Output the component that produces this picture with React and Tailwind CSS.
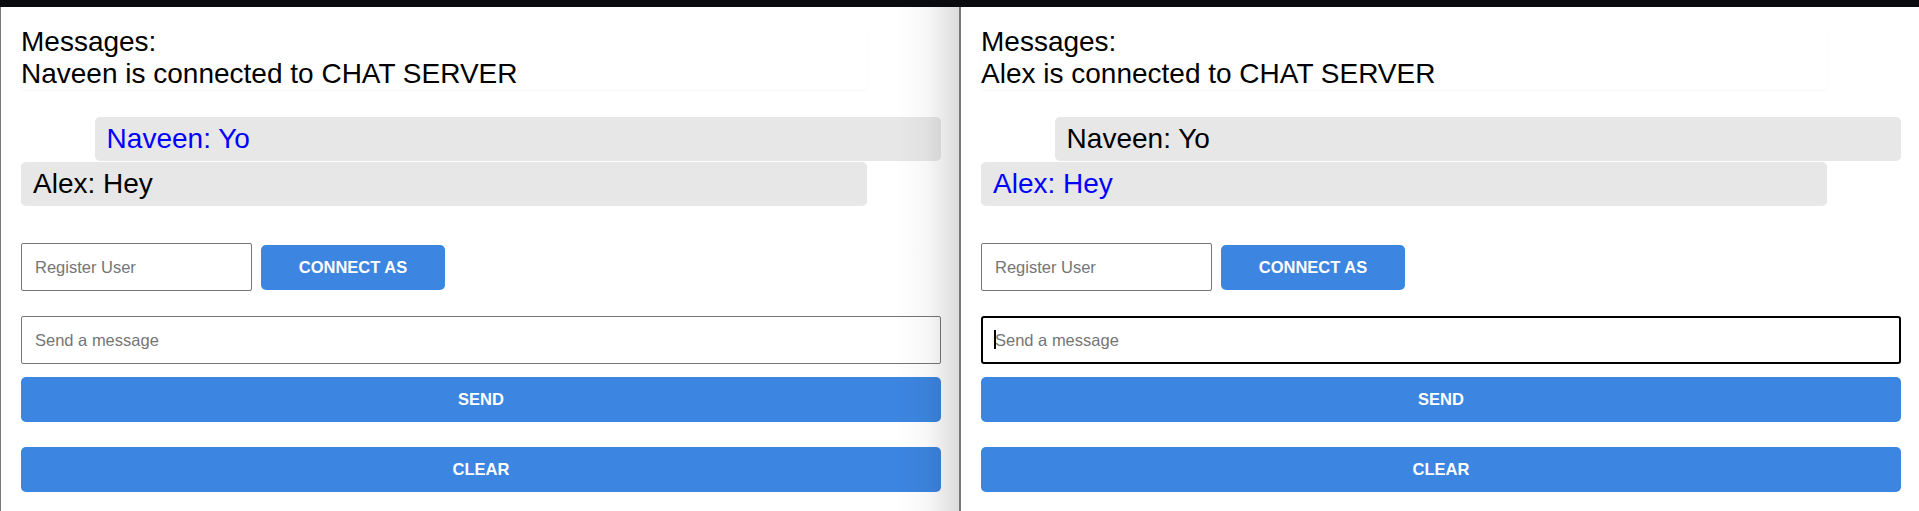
import React from 'react';

const ChatPanel = ({ user, ownName, messages, focused, shaded, className }) => {
  return (
    <div className={`relative pl-[20px] pr-[18px] pt-[19px] ${className}`}>
      <div className="w-[92%] rounded-[5px] text-[28px] leading-[32px] text-black shadow-[0_1px_2px_rgba(0,0,0,0.04)]">
        <div>Messages:</div>
        <div>{user} is connected to CHAT SERVER</div>
      </div>

      <div className="mt-[27px] flex flex-col gap-[1px]">
        {messages.map((m, i) => (
          <div
            key={i}
            className={`w-[92%] rounded-[5px] bg-[#e7e7e7] px-[12px] py-[6px] text-[28px] leading-[32px] ${
              i % 2 === 0 ? 'ml-auto' : ''
            } ${m.from === ownName ? 'text-[#0000ff]' : 'text-black'}`}
          >
            {m.from}: {m.text}
          </div>
        ))}
      </div>

      <div className="mt-[37px] flex items-center gap-[9px]">
        <input
          type="text"
          placeholder="Register User"
          className="h-[48px] w-[231px] rounded-[2px] border border-[#767676] px-[13px] text-[16.5px] text-black placeholder:text-[#757575] outline-none"
        />
        <button className="h-[45px] w-[184px] rounded-[5px] bg-[#3c85e0] text-[16.5px] font-bold text-white">
          CONNECT AS
        </button>
      </div>

      <div className="relative mt-[25px]">
        <input
          type="text"
          placeholder="Send a message"
          className={`block h-[48px] w-full px-[13px] text-[16.5px] text-black placeholder:text-[#757575] outline-none ${
            focused ? 'rounded-[3px] border-2 border-black pl-[12px]' : 'rounded-[2px] border border-[#767676]'
          }`}
        />
        {focused && <span className="pointer-events-none absolute left-[13px] top-[14px] h-[19px] w-[1.5px] bg-black"></span>}
      </div>

      <button className="mt-[13px] block h-[45px] w-full rounded-[5px] bg-[#3c85e0] text-[16.5px] font-bold text-white">
        SEND
      </button>
      <button className="mt-[25px] block h-[45px] w-full rounded-[5px] bg-[#3c85e0] text-[16.5px] font-bold text-white">
        CLEAR
      </button>

      {shaded && (
        <div className="pointer-events-none absolute right-0 top-0 bottom-0 w-[64px] bg-linear-to-r from-transparent via-black/[0.03] to-black/[0.14]"></div>
      )}
    </div>
  );
};

const App = () => {
  const messages = [
    { from: 'Naveen', text: 'Yo' },
    { from: 'Alex', text: 'Hey' },
  ];

  return (
    <div className="flex h-[511px] w-[1919px] flex-col overflow-hidden bg-white font-['Liberation_Sans',Arial,sans-serif]">
      <div className="h-[7px] bg-[#0a0b0f]"></div>
      <div className="flex flex-1">
        <ChatPanel
          user="Naveen"
          ownName="Naveen"
          messages={messages}
          shaded
          className="w-[959px] border-l border-[#777]"
        />
        <div className="w-[2px] bg-[#777]"></div>
        <ChatPanel user="Alex" ownName="Alex" messages={messages} focused className="flex-1" />
      </div>
    </div>
  );
};

export default App;
